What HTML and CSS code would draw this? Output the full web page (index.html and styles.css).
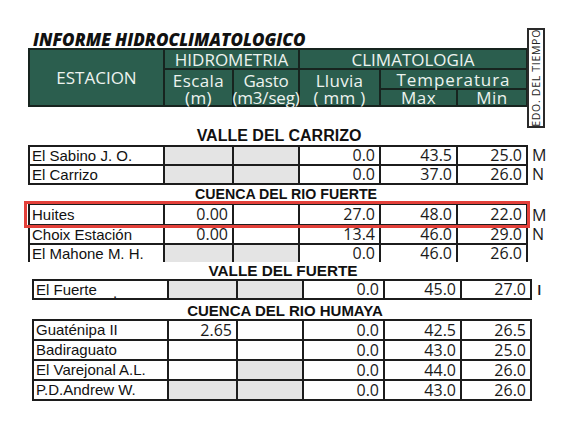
FILE: index.html
```html
<!DOCTYPE html>
<html lang="es">
<head>
<meta charset="utf-8">
<title>Informe Hidroclimatologico</title>
<link rel="stylesheet" href="styles.css">
</head>
<body>
<div class="page">
  <div class="top">
    <div class="top-main">
      <div class="title">INFORME HIDROCLIMATOLOGICO</div>
      <div class="head">
        <div class="h est">ESTACION</div>
        <div class="h hidro">HIDROMETRIA</div>
        <div class="h clima">CLIMATOLOGIA</div>
        <div class="h esc">Escala<br>(m)</div>
        <div class="h gas">Gasto<br>(m3/seg)</div>
        <div class="h llu">Lluvia<br>( mm )</div>
        <div class="h temp">Temperatura</div>
        <div class="h max">Max</div>
        <div class="h min">Min</div>
      </div>
    </div>
    <div class="edo"><span>EDO. DEL TIEMPO</span></div>
  </div>

  <div class="sec s1">VALLE DEL CARRIZO</div>
  <div class="tbl t1">
    <div class="row">
      <div class="c name">El Sabino J. O.</div>
      <div class="c g"></div>
      <div class="c g"></div>
      <div class="c n">0.0</div>
      <div class="c n">43.5</div>
      <div class="c n">25.0</div>
      <div class="mark">M</div>
    </div>
    <div class="row">
      <div class="c name">El Carrizo</div>
      <div class="c g"></div>
      <div class="c g"></div>
      <div class="c n">0.0</div>
      <div class="c n">37.0</div>
      <div class="c n">26.0</div>
      <div class="mark">N</div>
    </div>
  </div>

  <div class="sec s2">CUENCA DEL RIO FUERTE</div>
  <div class="wrap2">
    <div class="tbl t2">
      <div class="row">
        <div class="c name">Huites</div>
        <div class="c n">0.00</div>
        <div class="c"></div>
        <div class="c n">27.0</div>
        <div class="c n">48.0</div>
        <div class="c n">22.0</div>
        <div class="mark">M</div>
      </div>
      <div class="row">
        <div class="c name">Choix Estación</div>
        <div class="c n">0.00</div>
        <div class="c"></div>
        <div class="c n">13.4</div>
        <div class="c n">46.0</div>
        <div class="c n">29.0</div>
        <div class="mark">N</div>
      </div>
      <div class="row">
        <div class="c name">El Mahone M. H.</div>
        <div class="c g"></div>
        <div class="c g"></div>
        <div class="c n">0.0</div>
        <div class="c n">46.0</div>
        <div class="c n">26.0</div>
        <div class="mark"></div>
      </div>
    </div>
    <div class="redbox"></div>
  </div>

  <div class="sec s3">VALLE DEL FUERTE</div>
  <div class="tbl t3 shift">
    <div class="row">
      <div class="c name">El Fuerte <span class="dot">.</span></div>
      <div class="c g"></div>
      <div class="c g"></div>
      <div class="c n">0.0</div>
      <div class="c n">45.0</div>
      <div class="c n">27.0</div>
      <div class="mark thin">I</div>
    </div>
  </div>

  <div class="sec s4">CUENCA DEL RIO HUMAYA</div>
  <div class="tbl t4 shift">
    <div class="row">
      <div class="c name">Guaténipa II</div>
      <div class="c n">2.65</div>
      <div class="c"></div>
      <div class="c n">0.0</div>
      <div class="c n">42.5</div>
      <div class="c n">26.5</div>
      <div class="mark"></div>
    </div>
    <div class="row">
      <div class="c name">Badiraguato</div>
      <div class="c"></div>
      <div class="c"></div>
      <div class="c n">0.0</div>
      <div class="c n">43.0</div>
      <div class="c n">25.0</div>
      <div class="mark"></div>
    </div>
    <div class="row">
      <div class="c name">El Varejonal A.L.</div>
      <div class="c"></div>
      <div class="c g"></div>
      <div class="c n">0.0</div>
      <div class="c n">44.0</div>
      <div class="c n">26.0</div>
      <div class="mark"></div>
    </div>
    <div class="row">
      <div class="c name">P.D.Andrew W.</div>
      <div class="c g"></div>
      <div class="c g"></div>
      <div class="c n">0.0</div>
      <div class="c n">43.0</div>
      <div class="c n">26.0</div>
      <div class="mark"></div>
    </div>
  </div>
</div>
</body>
</html>
```

FILE: styles.css
```css
* { box-sizing: border-box; }
html, body { margin: 0; padding: 0; background: #fff; }
body { font-family: "Liberation Sans", Arial, sans-serif; color: #111; }

.page { width: 584px; height: 426px; overflow: hidden; padding: 28px 0 0 28px; }

.top { display: flex; align-items: flex-start; }
.top-main { width: 500px; padding-top: 3px; }
.title {
  font-family: "Open Sans", sans-serif; font-weight: 800; font-style: italic;
  font-size: 17px; line-height: 17px; height: 17px; padding-left: 5px;
  color: #111; white-space: nowrap;
}
.head {
  display: grid;
  grid-template-columns: 133px 67px 64px 79px 75px 68px;
  grid-template-rows: 18px 18px 15px;
  gap: 2px; padding: 2px; height: 59px;
  background: #17241f;
}
.h {
  background: #2b5e4e; color: #edf3ef;
  font-family: "Open Sans", sans-serif; font-size: 17px; font-weight: 500;
  line-height: 17px;
  display: flex; align-items: center; justify-content: center;
  text-align: center; white-space: nowrap;
}
.est { grid-column: 1; grid-row: 1 / 4; }
.hidro { grid-column: 2 / 4; grid-row: 1; }
.clima { grid-column: 4 / 7; grid-row: 1; }
.esc { grid-column: 2; grid-row: 2 / 4; padding-top: 2px; letter-spacing: 0.4px; }
.gas { grid-column: 3; grid-row: 2 / 4; padding-top: 2px; letter-spacing: -0.2px; }
.llu { grid-column: 4; grid-row: 2 / 4; padding-top: 2px; letter-spacing: 0.3px; }
.temp { grid-column: 5 / 7; grid-row: 2; letter-spacing: 0.9px; }
.max { grid-column: 5; grid-row: 3; letter-spacing: 0.5px; }
.min { grid-column: 6; grid-row: 3; letter-spacing: 0.5px; }

.edo {
  width: 18px; height: 100px; margin-left: -1px; margin-bottom: -21px;
  border: 2px solid #2a2a2a; background: #fff;
  display: flex; align-items: center; justify-content: center;
}
.edo span {
  writing-mode: vertical-rl; transform: rotate(180deg);
  font-family: "Open Sans", sans-serif; font-size: 10.5px; letter-spacing: 0.7px;
  color: #222; white-space: nowrap; line-height: 12px;
}

.sec {
  width: 500px; height: 16px; line-height: 16px;
  text-align: center; font-weight: bold; font-size: 15px;
  background: #fff; color: #111; white-space: nowrap;
  position: relative;
}
.s1 { margin-top: 21px; margin-bottom: 1px; padding-left: 2px; font-size: 16px; }
.s2 { margin-top: 1px; margin-bottom: 1px; padding-left: 16px; font-size: 14.2px; }
.s3 { margin-top: 1px; padding-left: 10px; font-size: 15.3px; }
.s4 { margin-top: 3px; padding-left: 14px; font-size: 15px; }

.tbl { width: 520px; }
.shift { margin-left: 4px; }
.row {
  display: grid;
  grid-template-columns: 137px 69px 66px 81px 77px 70px 20px;
}
.c {
  height: 19px;
  border-right: 2px solid #1c1c1c; border-bottom: 2px solid #1c1c1c;
  background: #fff; white-space: nowrap;
  line-height: 17px;
}
.c:first-child { border-left: 2px solid #1c1c1c; }
.row:first-child .c { border-top: 2px solid #1c1c1c; height: 21px; }
.c.g { background: #e4e4e4; }
.name { font-size: 15px; padding-left: 2px; color: #111; }
.n {
  font-family: "Open Sans", sans-serif; font-size: 16px;
  text-align: right; padding-right: 4px; color: #1a1a1a;
}
.mark {
  font-family: "Open Sans", sans-serif; font-size: 16px; color: #1a1a1a;
  padding-left: 4px; line-height: 17px;
  display: flex; align-items: flex-end; padding-bottom: 2px;
}
.thin { font-size: 15px; padding-left: 5px; font-weight: 600; }
.dot { display: inline-block; vertical-align: -3px; margin-left: 12px; }

.t2 .row:first-child .c { height: 23px; line-height: 19px; }
.t4 .c { height: 20px; line-height: 18px; }
.t4 .row:first-child .c { height: 22px; }

.wrap2 { position: relative; }
.t2 { height: 59px; overflow: hidden; }
.redbox {
  position: absolute; top: -2px; left: -4px; width: 506px; height: 27px;
  border: 3px solid #e3403a;
}
```
